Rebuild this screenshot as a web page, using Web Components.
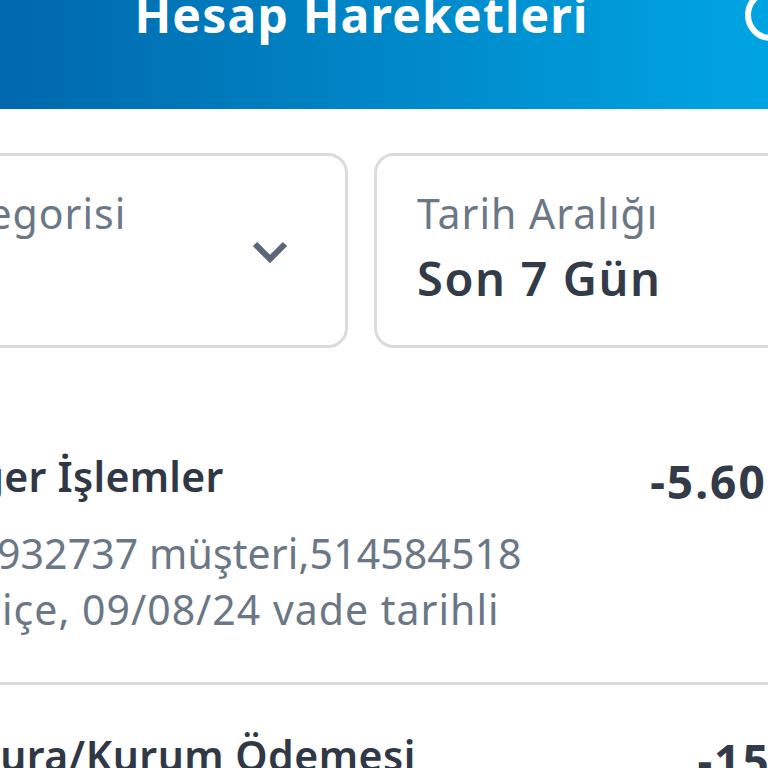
<!DOCTYPE html>
<html lang="tr">
<head>
<meta charset="utf-8">
<title>Hesap Hareketleri</title>
<style>
  html, body { margin: 0; height: 100%; overflow: hidden; background: #fff; }
  body { font-family: "Noto Sans", "Open Sans", sans-serif; }
</style>
</head>
<body>
<account-page>
  <app-header slot="header" title="Hesap Hareketleri"></app-header>
  <filter-bar slot="filters">
    <filter-card label="İşlem Kategorisi" arrow></filter-card>
    <filter-card label="Tarih Aralığı" value="Son 7 Gün"></filter-card>
  </filter-bar>
  <movement-row slot="rows" title="Diğer İşlemler" amount="-5.600,00 TL">
    <div style="margin-left:-3px;letter-spacing:.1px">932737 müşteri,514584518</div>
    <div style="margin-left:2px;letter-spacing:1px">içe, 09/08/24 vade tarihli</div>
  </movement-row>
  <movement-row slot="rows" title="Fatura/Kurum Ödemesi" amount="-150,00 TL" style="--amount-right:26px;--title-spacing:.5px"></movement-row>
</account-page>
<script>
class AccountPage extends HTMLElement {
  constructor() {
    super();
    this.attachShadow({ mode: 'open' });
  }

  connectedCallback() {
    this.shadowRoot.innerHTML = `
      <style>
      :host { display: block; width: 1212px; margin-left: -245px; }
      .rows { padding: 58px 0 0 245px; }
      </style>
      <slot name="header"></slot>
      <slot name="filters"></slot>
      <div class="rows"><slot name="rows"></slot></div>
    `;
  }
}

class AppHeader extends HTMLElement {
  constructor() {
    super();
    this.attachShadow({ mode: 'open' });
  }

  connectedCallback() {
    this.shadowRoot.innerHTML = `
      <style>
      :host {
        display: flex;
        justify-content: center;
        height: 109px;
        position: relative;
        background: linear-gradient(90deg, #004f8f 0%, #0069ad 21.6%, #00a2e0 80.5%, #00a8e6 100%);
        overflow: hidden;
      }
      h1 {
        margin: -20px 0 0 1px;
        font-size: 48px;
        line-height: 70px;
        letter-spacing: 1.2px;
        font-weight: 700;
        color: #fff;
        white-space: nowrap;
      }
      svg { position: absolute; left: 984px; top: -12px; }
      </style>
      <h1>${this.getAttribute('title')}</h1>
      <svg width="60" height="60" viewBox="0 0 60 60" fill="none" stroke="#fff" stroke-width="6">
        <circle cx="32" cy="27" r="23"/>
      </svg>
    `;
  }
}

class FilterBar extends HTMLElement {
  constructor() {
    super();
    this.attachShadow({ mode: 'open' });
  }

  connectedCallback() {
    this.shadowRoot.innerHTML = `
      <style>
      :host {
        display: grid;
        grid-template-columns: 1fr 1fr;
        gap: 26px;
        padding: 44px 0 0 0;
      }
      </style>
      <slot></slot>
    `;
  }
}

class FilterCard extends HTMLElement {
  constructor() {
    super();
    this.attachShadow({ mode: 'open' });
  }

  connectedCallback() {
    const value = this.getAttribute('value');
    const arrow = this.hasAttribute('arrow')
      ? `<svg width="36" height="24" viewBox="0 0 36 24" fill="none" stroke="#5b6679" stroke-width="6"><path d="M3 4l15 15L33 4"/></svg>`
      : '';
    this.shadowRoot.innerHTML = `
      <style>
      :host {
        display: block;
        position: relative;
        box-sizing: border-box;
        height: 195px;
        border: 3px solid #d9dcdf;
        border-radius: 20px;
        padding: 29px 40px;
      }
      .label { font-size: 41px; line-height: 56px; letter-spacing: 1px; color: #6b7785; white-space: nowrap; }
      .value { font-size: 47px; line-height: 66px; letter-spacing: 1.6px; margin-top: 4px; font-weight: 600; color: #323b47; white-space: nowrap; }
      svg { position: absolute; right: 57px; top: 84px; }
      </style>
      <div class="label" style="${this.hasAttribute('arrow') ? 'margin-left:2px' : ''}">${this.getAttribute('label')}</div>
      ${value ? `<div class="value">${value}</div>` : ''}
      ${arrow}
    `;
  }
}

class MovementRow extends HTMLElement {
  constructor() {
    super();
    this.attachShadow({ mode: 'open' });
  }

  connectedCallback() {
    this.shadowRoot.innerHTML = `
      <style>
      :host {
        display: flex;
        justify-content: space-between;
        align-items: flex-start;
        box-sizing: border-box;
        height: 279px;
        padding-top: 42px;
        border-bottom: 3px solid #d9dcdf;
      }
      .title { font-size: 41px; line-height: 56px; letter-spacing: var(--title-spacing, .3px); font-weight: 600; color: #2f3844; white-space: nowrap; margin-left: -64px; }
      .desc { font-size: 41px; line-height: 56px; color: #6b7785; white-space: nowrap; margin-top: 21px; }
      .amount { font-size: 46px; line-height: 56px; letter-spacing: 2px; font-weight: 700; color: #323b47; white-space: nowrap; margin: 5px var(--amount-right, 30px) 0 0; }
      </style>
      <div>
        <div class="title">${this.getAttribute('title')}</div>
        <div class="desc"><slot></slot></div>
      </div>
      <div class="amount">${this.getAttribute('amount')}</div>
    `;
  }
}

customElements.define('account-page', AccountPage);
customElements.define('app-header', AppHeader);
customElements.define('filter-bar', FilterBar);
customElements.define('filter-card', FilterCard);
customElements.define('movement-row', MovementRow);
</script>
</body>
</html>
